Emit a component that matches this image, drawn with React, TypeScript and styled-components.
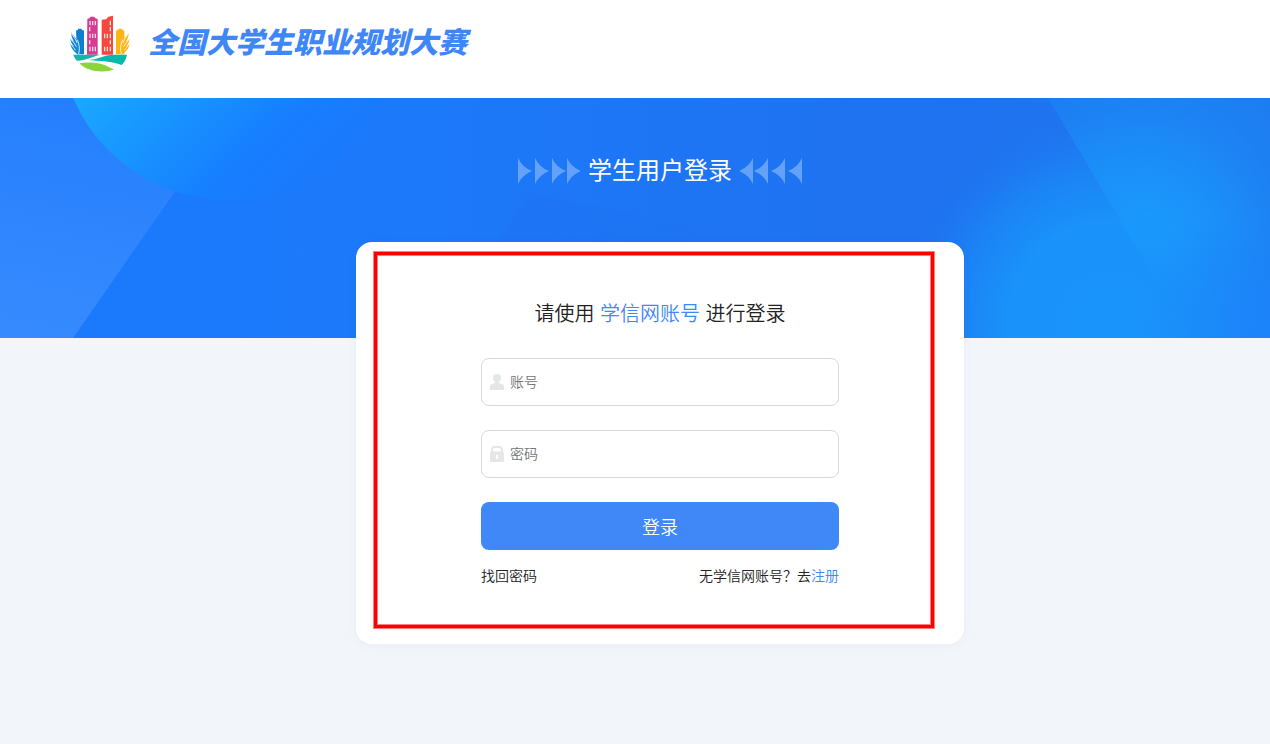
import React from 'react';
import styled, { createGlobalStyle } from 'styled-components';

const GlobalStyle = createGlobalStyle`
  * { box-sizing: border-box; }
  body {
    margin: 0;
    min-height: 100vh;
    background: #f2f5fa;
    color: #222;
    font-family: "Liberation Sans", "Noto Sans CJK SC", sans-serif;
    font-size: 14px;
    font-weight: 350;
  }
  a { color: inherit; text-decoration: none; }
`;

const Header = styled.header`
  display: flex;
  align-items: flex-start;
  gap: 18px;
  height: 98px;
  padding: 14px 70px;
  background: #fff;
`;

const SiteName = styled.h1`
  margin: 0;
  color: #3f87f8;
  font-family: "Noto Sans CJK SC", sans-serif;
  font-size: 29px;
  font-style: italic;
  font-weight: 900;
  line-height: 52px;
  white-space: nowrap;
`;

const Hero = styled.section`
  position: relative;
  height: 240px;
  padding: 56px 0 0 50px;
  overflow: hidden;
`;

const HeroArt = styled.svg`
  position: absolute;
  inset: 0;
  width: 100%;
  height: 100%;
`;

const HeroTitle = styled.div`
  position: relative;
  display: flex;
  align-items: center;
  justify-content: center;
  gap: 8px;
`;

const HeroText = styled.h2`
  margin: 0;
  color: #fff;
  font-size: 24px;
  font-weight: 400;
  line-height: 34px;
`;

const Main = styled.main`
  display: flex;
  justify-content: center;
  padding: 0 0 100px 50px;
`;

const Card = styled.div`
  position: relative;
  display: flex;
  justify-content: center;
  width: 100%;
  max-width: 608px;
  margin-top: -96px;
  padding: 56px 24px 58px;
  border-radius: 16px;
  background: #fff;
  box-shadow: 0 2px 12px rgba(40, 80, 140, 0.04);
`;

const Highlight = styled.div`
  position: absolute;
  inset: 10px 30px 16px 18px;
  border: 3px solid #f00;
  box-shadow: 0 0 0 1px rgba(255, 0, 0, 0.5), inset 0 0 0 1px rgba(255, 0, 0, 0.5);
  pointer-events: none;
`;

const Form = styled.form`
  display: flex;
  flex-direction: column;
  gap: 24px;
  width: 100%;
  max-width: 358px;
`;

const Prompt = styled.p`
  margin: 0 0 4px;
  font-size: 20px;
  line-height: 32px;
  text-align: center;
`;

const Accent = styled.span`
  color: #4088f8;
`;

const Field = styled.label`
  display: flex;
  align-items: center;
  gap: 6px;
  height: 48px;
  padding: 0 8px;
  border: 1px solid #d9d9d9;
  border-radius: 8px;
`;

const Input = styled.input`
  flex: 1;
  min-width: 0;
  height: 44px;
  padding: 0;
  border: 0;
  outline: 0;
  background: transparent;
  color: #222;
  font: inherit;
  &::placeholder { color: #757575; opacity: 1; }
`;

const Submit = styled.button`
  height: 48px;
  padding: 0;
  border: 0;
  border-radius: 8px;
  background: #4088f8;
  color: #fff;
  font-family: inherit;
  font-size: 18px;
  font-weight: 350;
`;

const Links = styled.div`
  display: flex;
  justify-content: space-between;
  margin-top: -8px;
  line-height: 20px;
`;

const RegisterLink = styled.a`
  && { color: #4088f8; }
`;

function Logo() {
  return (
    <svg width="60" height="58" viewBox="30 28 180 174" aria-hidden="true">
      <path d="M48 78l6-3v-3h11v3l7 3v71H52z" fill="#0d7fd0" />
      <path d="M34 82c2 9 13 15 18 24 6 12 8 30 3 44-3-3-10-6-14-12-5-6-9-13-10-21 4 4 7 6 11 8-6-6-10-14-11-23 4 4 7 7 11 9-5-8-9-18-8-29z" fill="#1588d6" />
      <path d="M34 84c3 11 14 17 17 31M32 102c4 9 12 12 17 24M33 119c4 7 10 10 13 18M52 105c6 13 8 28 4 43" fill="none" stroke="#fff" strokeWidth="2.500" />
      <path d="M82 43l7-3 2-4h12l2 4 8 3v107H81z" fill="#d53b8e" />
      <path d="M125 45l14-1 6-8 14-3v117h-34z" fill="#f5473d" />
      <path d="M168 78l7-3v-3h11v3l7 3v71h-25z" fill="#fcb614" />
      <path d="M206 82c-2 9-13 15-18 24-6 12-8 30-3 44 3-3 10-6 14-12 5-6 9-13 10-21-4 4-7 6-11 8 6-6 10-14 11-23-4 4-7 7-11 9 5-8 9-18 8-29z" fill="#fcb614" />
      <path d="M206 84c-3 11-14 17-17 31M208 102c-4 9-12 12-17 24M207 119c-4 7-10 10-13 18M188 105c-6 13-8 28-4 43" fill="none" stroke="#fff" strokeWidth="2.500" />
      <g fill="none" stroke="#fff" strokeWidth="4" opacity="0.8">
        <path d="M90 49v13M98 49v13M106 49v13M89 67v13M90 87v13M98 87v13M106 87v13M89 107v12M90 126v14M98 126v14M106 126v14" />
        <path d="M151 48v14M151 67v13M134 87v14M142 87v14M151 87v14M151 107v12M134 126v14M142 126v14M151 126v14" />
      </g>
      <path d="M40 150h81c-24 6-44 17-70 18-5-5-9-11-11-18z" fill="#14b6a6" />
      <path d="M82 166c30 0 48-16 80-16h39c-3 14-8 23-16 31-30-12-64-12-103-15z" fill="#06b9ac" />
      <path d="M58 176c27-5 66-2 84 9 8 5 14 7 20 9-28 12-78 9-104-18z" fill="#8bd43c" />
    </svg>
  );
}

function HeroBackground() {
  return (
    <HeroArt viewBox="0 0 1270 240" preserveAspectRatio="xMidYMid slice" aria-hidden="true">
      <defs>
        <linearGradient id="base" x1="0" y1="0" x2="1" y2="0">
          <stop offset="0.18" stopColor="#1b7afb" />
          <stop offset="0.34" stopColor="#1c79f9" />
          <stop offset="0.7" stopColor="#1f72f0" />
          <stop offset="1" stopColor="#1f75ee" />
        </linearGradient>
        <linearGradient id="slab" x1="0.2" y1="0" x2="0" y2="1">
          <stop offset="0" stopColor="#257ffd" />
          <stop offset="1" stopColor="#378bfe" />
        </linearGradient>
        <linearGradient id="disc" gradientUnits="userSpaceOnUse" x1="100" y1="-20" x2="250" y2="130">
          <stop offset="0" stopColor="#19a8ff" />
          <stop offset="0.75" stopColor="#167eff" />
          <stop offset="1" stopColor="#1a7afc" />
        </linearGradient>
        <linearGradient id="shade" x1="0" y1="0" x2="1" y2="0.3">
          <stop offset="0" stopColor="#1f70f0" />
          <stop offset="1" stopColor="#1f70f0" stopOpacity="0" />
        </linearGradient>
        <radialGradient id="glow" gradientUnits="userSpaceOnUse" cx="1110" cy="225" r="225">
          <stop offset="0" stopColor="#1994fa" />
          <stop offset="0.45" stopColor="#1994fa" stopOpacity="0.96" />
          <stop offset="0.68" stopColor="#1a8cf8" stopOpacity="0.65" />
          <stop offset="0.86" stopColor="#1c80f4" stopOpacity="0.2" />
          <stop offset="1" stopColor="#1f75f0" stopOpacity="0" />
        </radialGradient>
        <radialGradient id="wedge" gradientUnits="userSpaceOnUse" cx="1145" cy="130" r="200">
          <stop offset="0" stopColor="#1a99fb" />
          <stop offset="0.4" stopColor="#1b92f9" stopOpacity="0.75" />
          <stop offset="1" stopColor="#1e80f2" stopOpacity="0.4" />
        </radialGradient>
        <linearGradient id="wedgeFade" gradientUnits="userSpaceOnUse" x1="0" y1="130" x2="0" y2="240">
          <stop offset="0" stopColor="#fff" />
          <stop offset="1" stopColor="#fff" stopOpacity="0" />
        </linearGradient>
        <mask id="wedgeMask">
          <rect width="1270" height="240" fill="url(#wedgeFade)" />
        </mask>
        <radialGradient id="corner" gradientUnits="userSpaceOnUse" cx="1270" cy="240" r="130">
          <stop offset="0" stopColor="#1c84fb" />
          <stop offset="1" stopColor="#1c84fb" stopOpacity="0" />
        </radialGradient>
      </defs>
      <rect width="1270" height="240" fill="url(#base)" />
      <path d="M0 0h240L73 240H0z" fill="url(#slab)" />
      <circle cx="227" cy="-65" r="167" fill="url(#disc)" />
      <path d="M530 95L435 240H900V170z" fill="url(#shade)" opacity="0.45" />
      <rect x="880" width="390" height="240" fill="url(#glow)" />
      <path d="M1048 0h222v240h-80z" fill="url(#wedge)" mask="url(#wedgeMask)" />
      <rect x="1130" y="100" width="140" height="140" fill="url(#corner)" />
    </HeroArt>
  );
}

const arrowOffsets = [0, 17, 34, 49];

function Arrows({ reversed = false }: { reversed?: boolean }) {
  return (
    <svg width="62" height="26" viewBox="0 0 62 26" aria-hidden="true">
      <g fill="#64a1fa" transform={reversed ? 'matrix(-1 0 0 1 62 0)' : undefined}>
        {arrowOffsets.map((x) => (
          <path key={x} d={`M${x} 0Q${x + 4} 9 ${x + 14} 13Q${x + 4} 17 ${x} 26z`} />
        ))}
      </g>
    </svg>
  );
}

function UserIcon() {
  return (
    <svg width="14" height="16" viewBox="0 0 14 16" fill="#e6e6e6" aria-hidden="true">
      <path d="M3 3.500C3 1 4.500 0 7 0s4 1 4 3.500c0 2-.7 3.200-2 4.200v1.300l3 1c1.500.6 2 1.600 2 3V16H0v-3c0-1.400.5-2.400 2-3l3-1V7.700C3.700 6.700 3 5.500 3 3.500z" />
    </svg>
  );
}

function LockIcon() {
  return (
    <svg width="14" height="16" viewBox="0 0 14 16" aria-hidden="true">
      <path d="M2 7V4c0-2 1-3 3-3h4c2 0 3 1 3 3v3" fill="none" stroke="#e6e6e6" strokeWidth="2" />
      <path fillRule="evenodd" d="M1.500 5.500h11Q14 5.500 14 7v7.500q0 1.500-1.500 1.500h-11Q0 16 0 14.500V7q0-1.500 1.500-1.500zM6 9v4h2V9z" fill="#e6e6e6" />
    </svg>
  );
}

export default function App() {
  return (
    <>
      <GlobalStyle />
      <Header>
        <Logo />
        <SiteName>全国大学生职业规划大赛</SiteName>
      </Header>
      <Hero>
        <HeroBackground />
        <HeroTitle>
          <Arrows />
          <HeroText>学生用户登录</HeroText>
          <Arrows reversed />
        </HeroTitle>
      </Hero>
      <Main>
        <Card>
          <Form onSubmit={(event) => event.preventDefault()}>
            <Prompt>
              请使用 <Accent>学信网账号</Accent> 进行登录
            </Prompt>
            <Field>
              <UserIcon />
              <Input type="text" placeholder="账号" aria-label="账号" autoComplete="username" />
            </Field>
            <Field>
              <LockIcon />
              <Input type="password" placeholder="密码" aria-label="密码" autoComplete="current-password" />
            </Field>
            <Submit type="submit">登录</Submit>
            <Links>
              <a href="#recover">找回密码</a>
              <span>
                无学信网账号？去<RegisterLink href="#register">注册</RegisterLink>
              </span>
            </Links>
          </Form>
          <Highlight />
        </Card>
      </Main>
    </>
  );
}
